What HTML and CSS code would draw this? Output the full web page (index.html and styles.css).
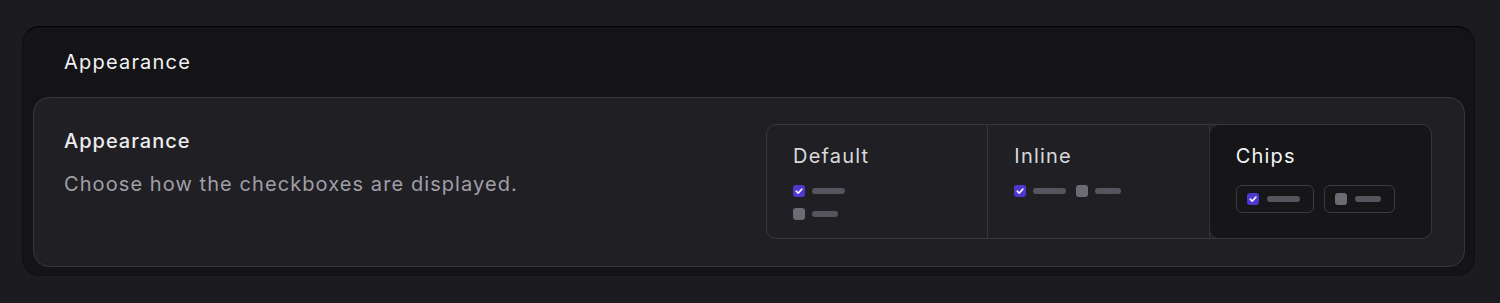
FILE: index.html
```html
<!DOCTYPE html>
<html>
<head>
<meta charset="utf-8">
<link rel="stylesheet" href="styles.css">
</head>
<body>
<div class="page">
  <section class="panel">
    <header class="panel-head">Appearance</header>
    <div class="setting">
      <div class="setting-text">
        <div class="setting-title">Appearance</div>
        <div class="setting-desc">Choose how the checkboxes are displayed.</div>
      </div>
      <div class="segments">
        <div class="seg">
          <div class="seg-label">Default</div>
          <div class="demo demo-stack">
            <div class="row"><span class="box on"><svg viewBox="0 0 12 12"><path d="M3.2 6.2 L5.2 8.1 L8.9 4.1" /></svg></span><span class="bar"></span></div>
            <div class="row"><span class="box"></span><span class="bar short"></span></div>
          </div>
        </div>
        <div class="seg">
          <div class="seg-label">Inline</div>
          <div class="demo demo-inline">
            <div class="row"><span class="box on"><svg viewBox="0 0 12 12"><path d="M3.2 6.2 L5.2 8.1 L8.9 4.1" /></svg></span><span class="bar"></span></div>
            <div class="row"><span class="box"></span><span class="bar short"></span></div>
          </div>
        </div>
        <div class="seg active">
          <div class="seg-label">Chips</div>
          <div class="demo demo-chips">
            <div class="chip"><span class="box on"><svg viewBox="0 0 12 12"><path d="M3.2 6.2 L5.2 8.1 L8.9 4.1" /></svg></span><span class="bar"></span></div>
            <div class="chip"><span class="box"></span><span class="bar short"></span></div>
          </div>
        </div>
      </div>
    </div>
  </section>
</div>
</body>
</html>
```

FILE: styles.css
```css
* { box-sizing: border-box; }
html, body { margin: 0; padding: 0; }
body {
  background: #1c1b20;
  font-family: Inter, "Noto Sans", sans-serif;
  color: #ededf0;
  width: 1500px;
  height: 303px;
  overflow: hidden;
}
.page {
  padding: 26px 25px 0 22px;
}
.panel {
  background: #141417;
  border: 1px solid #101013;
  border-top-color: #030304;
  border-radius: 18px;
  padding: 0 9px 8px 10px;
}
.panel-head {
  height: 70px;
  display: flex;
  align-items: center;
  padding-left: 31px;
  padding-bottom: 1px;
  font-size: 20px;
  font-weight: 400;
  color: #f2f2f4;
  letter-spacing: 1.2px;
}
.setting {
  background: #202024;
  border: 1px solid #36363c;
  border-radius: 16px;
  padding: 26px 32px 27px 30px;
  display: flex;
  justify-content: space-between;
  align-items: flex-start;
}
.setting-text { padding-top: 5px; }
.setting-title {
  font-size: 20px;
  font-weight: 500;
  color: #ececef;
  line-height: 24px;
  letter-spacing: 1px;
}
.setting-desc {
  margin-top: 19px;
  font-size: 20px;
  color: #a09fa8;
  line-height: 24px;
  letter-spacing: 1.08px;
}
.segments {
  width: 666px;
  height: 115px;
  border: 1px solid #36363c;
  border-radius: 10px;
  display: grid;
  grid-template-columns: 1fr 1fr 1fr;
  overflow: hidden;
}
.seg {
  padding: 18px 26px 0 26px;
  border-right: 1px solid #36363c;
}
.seg:last-child { border-right: none; }
.seg.active {
  background: #161619;
  border-radius: 9px;
  box-shadow: 0 0 0 1px #2c2c31;
}
.seg-label {
  font-size: 20px;
  line-height: 26px;
  color: #d9d9de;
  letter-spacing: 1.2px;
}
.seg.active .seg-label { color: #f4f4f6; }
.demo { margin-top: 16px; }
.row { display: flex; align-items: center; gap: 7px; }
.demo-stack .row + .row { margin-top: 11px; }
.demo-inline { display: flex; gap: 10px; }
.box {
  width: 12px;
  height: 12px;
  border-radius: 3px;
  background: #6c6b73;
  display: inline-flex;
  flex: none;
}
.box.on { background: #4d38d0; }
.box svg { width: 12px; height: 12px; }
.box svg path {
  fill: none;
  stroke: #f4f2ff;
  stroke-width: 1.6;
  stroke-linecap: round;
  stroke-linejoin: round;
}
.bar {
  width: 33px;
  height: 6px;
  border-radius: 3px;
  background: #56555d;
}
.bar.short { width: 26px; }
.demo-chips { display: flex; margin-top: 16px; gap: 10px; }
.chip {
  height: 28px;
  border: 1px solid #3a3a40;
  border-radius: 6px;
  display: flex;
  align-items: center;
  gap: 8px;
  padding: 0 13px 0 10px;
}
```
